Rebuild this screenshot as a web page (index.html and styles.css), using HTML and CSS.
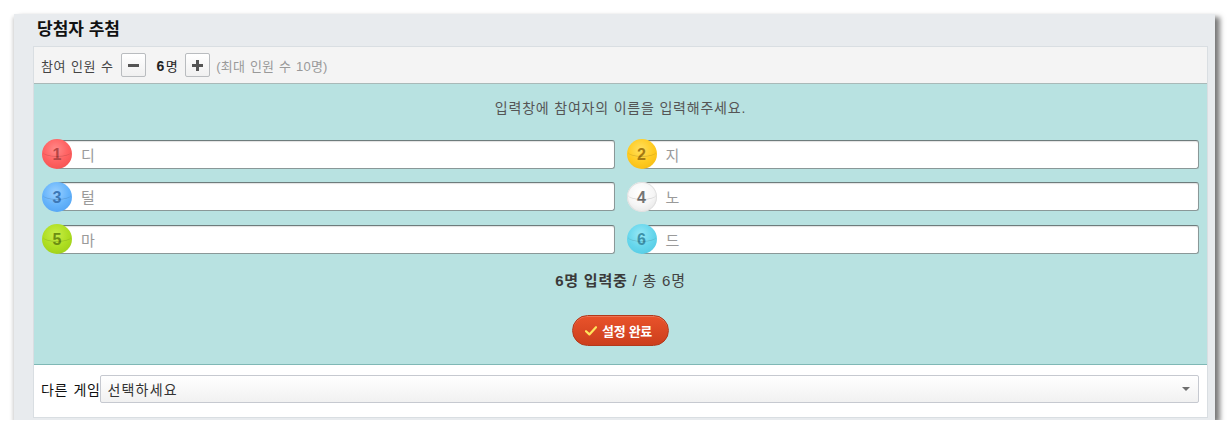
FILE: index.html
```html
<!DOCTYPE html>
<html lang="ko">
<head>
<meta charset="utf-8">
<title>당첨자 추첨</title>
<link rel="stylesheet" href="styles.css">
</head>
<body>
<div class="frame">
  <h2 class="title">당첨자 추첨</h2>
  <div class="panel">
    <div class="toolbar">
      <span class="label">참여 인원 수</span>
      <span class="step"><span class="minus"></span></span>
      <span class="count"><b>6</b>명</span>
      <span class="step"><span class="plus"></span></span>
      <span class="max">(최대 인원 수 10명)</span>
    </div>
    <div class="entry">
      <p class="guide">입력창에 참여자의 이름을 입력해주세요.</p>
      <div class="grid">
        <div class="field"><span class="ball red">1</span><div class="input"><span>디</span></div></div>
        <div class="field"><span class="ball yellow">2</span><div class="input"><span>지</span></div></div>
        <div class="field"><span class="ball blue">3</span><div class="input"><span>털</span></div></div>
        <div class="field"><span class="ball white">4</span><div class="input"><span>노</span></div></div>
        <div class="field"><span class="ball green">5</span><div class="input"><span>마</span></div></div>
        <div class="field"><span class="ball cyan">6</span><div class="input"><span>드</span></div></div>
      </div>
      <p class="status"><b>6명 입력중</b> / 총 6명</p>
      <div class="actions">
        <span class="done">
          <svg class="check" viewBox="0 0 12 10" width="12" height="10"><path d="M1 5.2 L4.4 8.4 L11 1.2" fill="none" stroke="#ffe45c" stroke-width="2.2" stroke-linecap="round" stroke-linejoin="round"/></svg>
          설정 완료
        </span>
      </div>
    </div>
    <div class="other">
      <span class="other-label">다른 게임</span>
      <div class="select"><span>선택하세요</span><span class="caret"></span></div>
    </div>
  </div>
</div>
</body>
</html>
```
FILE: styles.css
```css
* { box-sizing: border-box; }
html, body { margin: 0; padding: 0; background: #fff; }
body {
  font-family: "Liberation Sans", "Noto Sans CJK KR", sans-serif;
  color: #333;
}
.frame {
  margin: 14px 0 0 14px;
  width: 1201px;
  height: 406px;
  background: #e8ebee;
  padding: 0 7px 2px 19px;
  box-shadow: 5px 3px 5px rgba(0,0,0,0.5), -1px 3px 4px rgba(0,0,0,0.2);
}
.title {
  margin: 0;
  height: 32px;
  line-height: 32px;
  padding-left: 4px;
  font-size: 17px;
  font-weight: bold;
  color: #111;
}
.panel {
  border: 1px solid #d9dee2;
  background: #fff;
}
.toolbar {
  height: 37px;
  background: #f4f4f4;
  border-bottom: 1px solid #a9b9b8;
  display: flex;
  align-items: center;
  padding-left: 7px;
  font-size: 13px;
  letter-spacing: 0.5px;
  word-spacing: 1px;
  color: #444;
}
.step {
  width: 25px;
  height: 24px;
  border: 1px solid #b9bcbf;
  border-radius: 2px;
  background: linear-gradient(#ffffff, #f0f0f0);
  margin-left: 7px;
  display: flex;
  align-items: center;
  justify-content: center;
}
.minus, .plus { display: block; width: 11px; height: 3px; background: #555; position: relative; }
.plus::after { content: ""; position: absolute; left: 4px; top: -4px; width: 3px; height: 11px; background: #555; }
.count { margin-left: 11px; font-size: 13px; color: #222; }
.count b { font-size: 14px; margin-right: 1px; }
.max { margin-left: 6px; color: #999; letter-spacing: 0.2px; }
.entry {
  background: #b8e2e1;
  border-bottom: 1px solid #7fb8b5;
  padding: 14px 8px 18px;
}
.guide {
  margin: 0 0 21px;
  line-height: 20px;
  font-size: 14px;
  letter-spacing: 0.8px;
  text-align: center;
  color: #555;
}
.grid {
  display: grid;
  grid-template-columns: 1fr 1fr;
  column-gap: 12px;
  row-gap: 12.5px;
}
.field {
  display: flex;
  align-items: center;
  height: 30px;
}
.ball {
  position: relative;
  z-index: 1;
  flex: none;
  width: 30px;
  height: 30px;
  border-radius: 50%;
  text-align: center;
  line-height: 31px;
  font-weight: bold;
  font-size: 16px;
  font-family: "Liberation Sans", sans-serif;
}
.ball::after {
  content: "";
  position: absolute;
  left: 1px; right: 1px;
  top: 8px; height: 9px;
  border-bottom: 1px solid rgba(0,0,0,0.14);
  border-radius: 50%;
}
.red { background: radial-gradient(circle at 45% 35%, #ff8a8a 0%, #ff6464 45%, #f04848 100%); color: #b54646; }
.yellow { background: radial-gradient(circle at 45% 35%, #ffe060 0%, #ffcb22 50%, #f2b40c 100%); color: #a67a12; }
.blue { background: radial-gradient(circle at 45% 35%, #9ad0ff 0%, #66b4fb 50%, #4a9cf0 100%); color: #3c78b6; }
.white { background: radial-gradient(circle at 45% 35%, #ffffff 0%, #f6f6f6 50%, #dedede 100%); color: #767676; box-shadow: inset 0 0 0 1px #e0e0e0; }
.green { background: radial-gradient(circle at 45% 35%, #c8ee48 0%, #aede22 50%, #98c814 100%); color: #6c8e12; }
.cyan { background: radial-gradient(circle at 45% 35%, #96e8f6 0%, #66d6ec 50%, #4cc6e0 100%); color: #3d91a8; }
.input {
  flex: 1;
  margin-left: -15px;
  height: 29px;
  background: #fff;
  border: 1px solid #8a9898;
  border-top-color: #6e7c7c;
  border-radius: 3px;
  box-shadow: inset 0 1px 1px rgba(0,0,0,0.12);
  padding-left: 23px;
  display: flex;
  align-items: center;
  font-family: "Noto Sans CJK KR", sans-serif;
  font-size: 15px;
  color: #9a9a9a;
}
.status {
  margin: 17px 0 0;
  line-height: 20px;
  font-size: 15px;
  letter-spacing: 0.8px;
  text-align: center;
  color: #444;
}
.status b { color: #3a3a3a; }
.actions {
  margin-top: 24px;
  display: flex;
  justify-content: center;
}
.done {
  width: 97px;
  height: 31px;
  border-radius: 16px;
  border: 1px solid #b3381a;
  background: linear-gradient(#e9532b, #cc3e1c);
  box-shadow: inset 0 1px 0 rgba(255,255,255,0.2);
  color: #fff;
  font-weight: bold;
  font-size: 13px;
  letter-spacing: -0.3px;
  display: flex;
  align-items: center;
  justify-content: center;
  gap: 5px;
}
.check { display: block; margin-left: -4px; }
.other {
  display: flex;
  align-items: center;
  padding: 9px 8px 14px 7px;
  height: 52px;
}
.other-label {
  font-size: 14px;
  color: #111;
  font-family: "Noto Sans CJK KR", sans-serif;
  letter-spacing: 0.6px;
  word-spacing: 1px;
}
.select {
  flex: 1;
  height: 28px;
  border: 1px solid #c6c9d0;
  border-radius: 2px;
  background: linear-gradient(#ffffff, #f1f1f1);
  display: flex;
  align-items: center;
  justify-content: space-between;
  padding: 0 8px 0 6px;
  font-size: 14px;
  letter-spacing: 1.2px;
  color: #333;
}
.caret {
  width: 0; height: 0;
  border-left: 4px solid transparent;
  border-right: 4px solid transparent;
  border-top: 4px solid #6e6e6e;
}
```
